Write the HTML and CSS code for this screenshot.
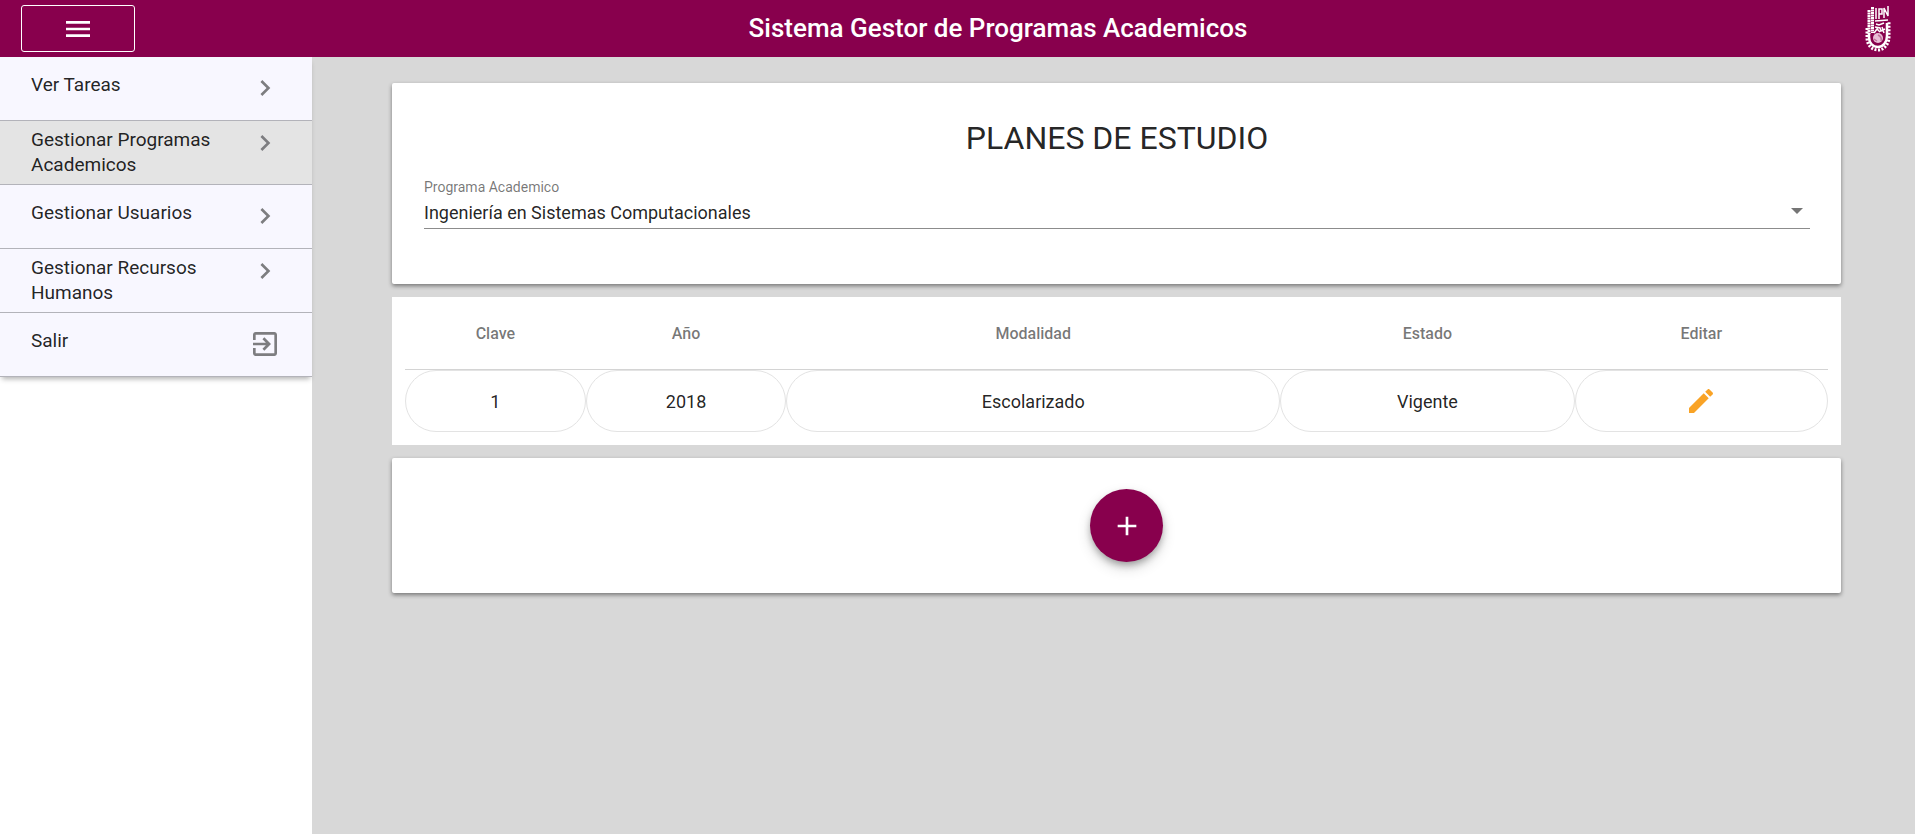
FILE: index.html
```
<!DOCTYPE html>
<html lang="es">
<head>
<meta charset="utf-8">
<meta name="viewport" content="width=device-width, initial-scale=1">
<title>Sistema Gestor de Programas Academicos</title>
<link rel="stylesheet" href="styles.css">
</head>
<body>
<header class="topbar">
  <button class="menu-button" type="button" aria-label="Menu">
    <svg class="icon" viewBox="0 0 24 24"><path d="M3 18h18v-2H3v2zm0-5h18v-2H3v2zm0-7v2h18V6H3z"/></svg>
  </button>
  <h1 class="topbar-title">Sistema Gestor de Programas Academicos</h1>
  <div class="brand">
    <svg class="brand-logo" viewBox="0 0 28 46" role="img" aria-label="IPN">
      <path class="logo-column" d="M5 4v24M8.500 1v26"/>
      <path class="logo-stroke" d="M12 2v11M15 13V3h3v5h-3M20 12V2l4 8V0M11 15l13-1"/>
      <path class="logo-gear" d="M5 27v4c0 6 4 10 9 10s9-5 9-11V17"/>
      <path class="logo-teeth" d="M3 22v10c0 7 5 12 11 12s11-6 11-13V16"/>
      <path class="logo-stroke" d="M12 18l3 1 5-2M11 21l5 1 1 3 4-2M10 27l3-4 3 3M18 21l2 6"/>
      <circle class="logo-globe" cx="14" cy="32" r="5"/>
      <path class="logo-shade" d="M14 29c2 1 4 3 3 6M10 33l3 2"/>
    </svg>
  </div>
</header>
<div class="shell">
  <aside class="sidebar">
    <nav class="nav">
      <a class="nav-item" href="#"><span class="nav-content"><span>Ver Tareas</span><svg class="icon" viewBox="0 0 24 24"><path d="M10 6L8.590 7.410 13.170 12l-4.580 4.590L10 18l6-6z"/></svg></span></a>
      <a class="nav-item nav-item-active" href="#"><span class="nav-content"><span>Gestionar Programas Academicos</span><svg class="icon" viewBox="0 0 24 24"><path d="M10 6L8.590 7.410 13.170 12l-4.580 4.590L10 18l6-6z"/></svg></span></a>
      <a class="nav-item" href="#"><span class="nav-content"><span>Gestionar Usuarios</span><svg class="icon" viewBox="0 0 24 24"><path d="M10 6L8.590 7.410 13.170 12l-4.580 4.590L10 18l6-6z"/></svg></span></a>
      <a class="nav-item" href="#"><span class="nav-content"><span>Gestionar Recursos Humanos</span><svg class="icon" viewBox="0 0 24 24"><path d="M10 6L8.590 7.410 13.170 12l-4.580 4.590L10 18l6-6z"/></svg></span></a>
      <a class="nav-item" href="#"><span class="nav-content"><span>Salir</span><svg class="icon" viewBox="0 0 24 24"><path d="M10.090 15.590L11.500 17l5-5-5-5-1.410 1.410L12.670 11H3v2h9.670l-2.580 2.590zM19 3H5c-1.110 0-2 .9-2 2v4h2V5h14v14H5v-4H3v4c0 1.100.89 2 2 2h14c1.100 0 2-.9 2-2V5c0-1.100-.9-2-2-2z"/></svg></span></a>
    </nav>
  </aside>
  <main class="main">
    <section class="card filter-card">
      <h2 class="card-title">PLANES DE ESTUDIO</h2>
      <label class="field-label" for="programa">Programa Academico</label>
      <div class="field">
        <select class="field-select" id="programa">
          <option>Ingeniería en Sistemas Computacionales</option>
        </select>
        <span class="field-arrow"></span>
      </div>
    </section>
    <section class="table-card">
      <table class="plans">
        <colgroup><col class="col-key"><col class="col-year"><col class="col-mode"><col class="col-state"><col class="col-edit"></colgroup>
        <thead>
          <tr><th>Clave</th><th>Año</th><th>Modalidad</th><th>Estado</th><th>Editar</th></tr>
        </thead>
        <tbody>
          <tr>
            <td>1</td><td>2018</td><td>Escolarizado</td><td>Vigente</td>
            <td><button class="edit-button" type="button" aria-label="Editar"><svg class="icon" viewBox="0 0 24 24"><path d="M3 17.250V21h3.750L17.810 9.940l-3.750-3.750L3 17.250zM20.710 7.040c.39-.39.39-1.020 0-1.410l-2.340-2.340c-.39-.39-1.020-.39-1.410 0l-1.830 1.830 3.750 3.750 1.830-1.830z"/></svg></button></td>
          </tr>
        </tbody>
      </table>
    </section>
    <section class="card add-card">
      <button class="fab" type="button" aria-label="Agregar"><svg class="icon" viewBox="0 0 24 24"><path d="M19 13h-6v6h-2v-6H5v-2h6V5h2v6h6v2z"/></svg></button>
    </section>
  </main>
</div>
</body>
</html>
```
FILE: styles.css
```
* {
  box-sizing: border-box;
}

body {
  margin: 0;
  min-height: 100vh;
  display: flex;
  flex-direction: column;
  font-family: Roboto, "Liberation Sans", sans-serif;
  color: rgba(0, 0, 0, 0.87);
  background: #d8d8d8;
}

.icon {
  display: block;
  width: 32px;
  height: 32px;
  fill: currentColor;
}

.topbar {
  display: flex;
  align-items: center;
  height: 57px;
  padding: 0 20px 0 21px;
  background: #88004d;
  color: #fff;
}

.menu-button {
  display: flex;
  align-items: center;
  justify-content: center;
  width: 114px;
  height: 47px;
  padding: 0;
  border: 1px solid #fff;
  border-radius: 3px;
  background: transparent;
  color: #fff;
}

.topbar-title {
  flex: 1;
  margin: 0;
  padding-bottom: 2px;
  font-size: 26px;
  font-weight: 500;
  line-height: 32px;
  text-align: center;
}

.brand {
  display: flex;
  justify-content: center;
  width: 34px;
}

.brand-logo {
  width: 28px;
  height: 46px;
  fill: none;
  stroke: #fff;
}

.logo-column {
  stroke-width: 3;
  stroke-dasharray: 2 0.5;
}

.logo-stroke {
  stroke-width: 1.5;
}

.logo-gear {
  stroke-width: 2.5;
}

.logo-teeth {
  stroke-width: 3;
  stroke-dasharray: 2 1.5;
}

.logo-globe {
  fill: #e9bdd6;
  stroke: none;
}

.logo-shade {
  stroke: #c0709a;
  stroke-width: 1.5;
}

.shell {
  flex: 1;
  display: flex;
}

.sidebar {
  flex: none;
  width: 312px;
  background: #fff;
}

.nav {
  background: #f8f7ff;
  box-shadow: 0 4px 5px -2px rgba(0, 0, 0, 0.3);
}

.nav-item {
  display: flex;
  align-items: center;
  min-height: 64px;
  padding: 0 31px 2px;
  border-bottom: 1px solid #b3b3ba;
  color: inherit;
  font-size: 19px;
  line-height: 25px;
  text-decoration: none;
}

.nav-item-active {
  background: #e4e4e4;
}

.nav-content {
  flex: 1;
  display: flex;
  align-items: flex-start;
  justify-content: space-between;
  gap: 16px;
}

.nav-content .icon {
  flex: none;
  color: #7d7d80;
}

.main {
  flex: 1;
  display: flex;
  flex-direction: column;
  gap: 13px;
  padding: 26px 74px 26px 80px;
}

.card {
  background: #fff;
  border-radius: 2px;
  box-shadow: 0 2px 4px rgba(0, 0, 0, 0.45);
}

.filter-card {
  padding: 32px 31px 55px 32px;
}

.card-title {
  margin: 0 0 16px;
  font-size: 32px;
  font-weight: 400;
  line-height: 46px;
  text-align: center;
}

.field-label {
  display: block;
  color: rgba(0, 0, 0, 0.54);
  font-size: 14px;
  line-height: 20px;
}

.field {
  display: grid;
  align-items: center;
  border-bottom: 1px solid #8c8c8c;
}

.field-select,
.field-arrow {
  grid-area: 1 / 1;
}

.field-select {
  appearance: none;
  width: 100%;
  height: 31px;
  padding: 0 32px 0 0;
  border: 0;
  background: transparent;
  color: inherit;
  font-family: inherit;
  font-size: 18px;
}

.field-arrow {
  justify-self: end;
  margin: 0 7px 4px 0;
  border: 6px solid transparent;
  border-top-color: #757575;
  border-bottom: 0;
  pointer-events: none;
}

.table-card {
  padding: 0 13px 13px;
  background: #fff;
}

.plans {
  width: 100%;
  table-layout: fixed;
  border-collapse: separate;
  border-spacing: 0;
  text-align: center;
}

.col-key {
  width: 12.7%;
}

.col-year {
  width: 14.1%;
}

.col-mode {
  width: 34.7%;
}

.col-state {
  width: 20.7%;
}

.col-edit {
  width: 17.8%;
}

.plans th {
  height: 73px;
  padding: 0;
  border-bottom: 1px solid #d4d4d4;
  color: rgba(0, 0, 0, 0.54);
  font-size: 16px;
  font-weight: 500;
}

.plans td {
  height: 62px;
  padding: 0;
  border: 1px solid #e3e3e3;
  border-radius: 32px;
  font-size: 18px;
}

.edit-button {
  display: block;
  margin: 0 auto;
  padding: 0;
  border: 0;
  background: none;
  color: #f9a326;
}

.add-card {
  display: flex;
  justify-content: center;
  padding: 31px 31px 31px 51px;
}

.fab {
  display: flex;
  align-items: center;
  justify-content: center;
  width: 73px;
  height: 73px;
  padding: 0;
  border: 0;
  border-radius: 50%;
  background: #88004d;
  color: #fff;
  box-shadow: 0 4px 7px -1px rgba(0, 0, 0, 0.3), 0 6px 14px rgba(0, 0, 0, 0.16);
}
```
